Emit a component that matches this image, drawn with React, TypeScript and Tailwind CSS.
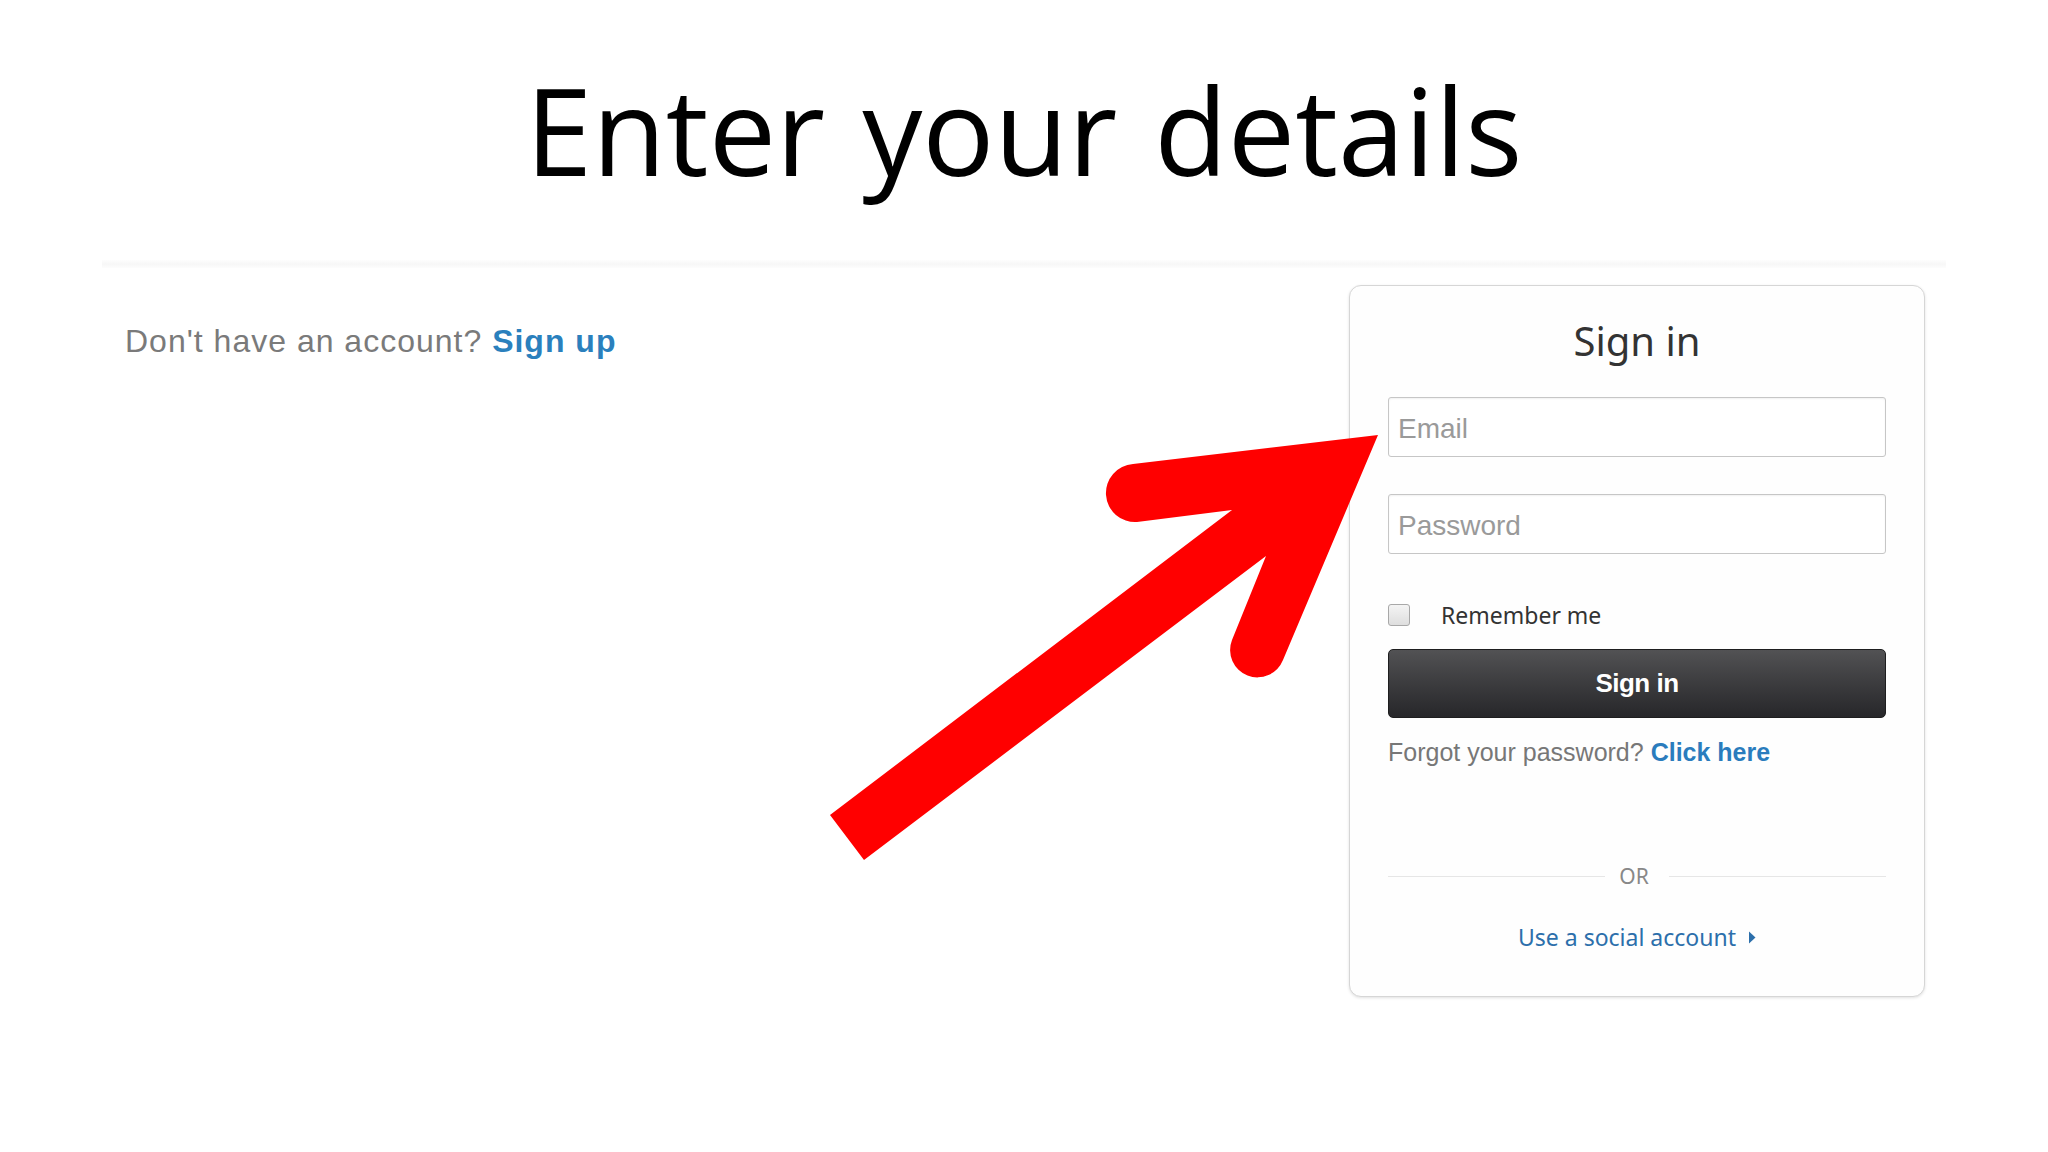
import React from "react";

function Arrow() {
  return (
    <svg
      className="absolute left-0 top-0 pointer-events-none"
      width={2048}
      height={1152}
      viewBox="0 0 2048 1152"
    >
      <path
        d="M 1378 435 L 1133 464 A 29 29 0 0 0 1137 522 L 1232 510 L 830 815 L 864 860 L 1266 556 L 1232 640 A 27 27 0 0 0 1283 660 Z"
        fill="#ff0000"
      />
    </svg>
  );
}

export default function App() {
  return (
    <div className="relative w-[2048px] h-[1152px] bg-white overflow-hidden">
      <h1
        className="pt-[70px] text-center text-[120px] leading-[120px] text-black font-normal [word-spacing:6px]"
        style={{ fontFamily: '"Open Sans", "Noto Sans", sans-serif' }}
      >
        Enter your details
      </h1>
      <div className="mx-[102px] mt-[70px] h-[8px] bg-gradient-to-b from-[#fdfdfd] via-[#f7f7f7] to-[#fdfdfd]" />
      <div className="flex justify-between items-start pl-[125px] pr-[123px] pt-[17px]">
        <p
          className="mt-[40px] text-[32px] leading-[32px] tracking-[1px] text-[#7a7a7a]"
          style={{ fontFamily: '"Liberation Sans", Arial, sans-serif' }}
        >
          Don't have an account?{" "}
          <span className="font-bold text-[#2a80bd]">Sign up</span>
        </p>
        <div className="box-border w-[576px] h-[712px] rounded-[12px] border border-[#d6d6d6] bg-[#fefefe] shadow-[0_1px_3px_rgba(0,0,0,0.12)] px-[38px] pt-[35px] flex flex-col">
          <h2
            className="text-center text-[40px] leading-[40px] text-[#333]"
            style={{ fontFamily: '"Noto Sans", "Open Sans", sans-serif' }}
          >
            Sign in
          </h2>
          <div
            className="mt-[36px] h-[60px] rounded-[3px] border border-[#c6c6c6] bg-white shadow-[inset_0_1px_2px_rgba(0,0,0,0.06)] flex items-center pl-[9px] pt-[3px] text-[28px] text-[#9a9a9a]"
            style={{ fontFamily: '"Liberation Sans", Arial, sans-serif' }}
          >
            Email
          </div>
          <div
            className="mt-[37px] h-[60px] rounded-[3px] border border-[#c6c6c6] bg-white shadow-[inset_0_1px_2px_rgba(0,0,0,0.06)] flex items-center pl-[9px] pt-[3px] text-[28px] text-[#9a9a9a]"
            style={{ fontFamily: '"Liberation Sans", Arial, sans-serif' }}
          >
            Password
          </div>
          <div className="mt-[46px] h-[30px] flex items-center">
            <div className="w-[22px] h-[22px] rounded-[3px] border border-[#a8a8a8] bg-gradient-to-b from-[#f4f4f4] to-[#dedede]" />
            <span
              className="ml-[31px] text-[23px] text-[#333]"
              style={{ fontFamily: '"Noto Sans", "Open Sans", sans-serif' }}
            >
              Remember me
            </span>
          </div>
          <div
            className="mt-[19px] h-[69px] rounded-[5px] border border-[#1e1e1f] bg-gradient-to-b from-[#525254] to-[#27272a] flex items-center justify-center text-white font-bold text-[26px] tracking-[-0.5px]"
            style={{ fontFamily: '"Liberation Sans", Arial, sans-serif' }}
          >
            Sign in
          </div>
          <p
            className="mt-[22px] text-[25px] leading-[24px] text-[#777]"
            style={{ fontFamily: '"Liberation Sans", Arial, sans-serif' }}
          >
            Forgot your password?{" "}
            <span className="font-bold text-[#2a7cbd]">Click here</span>
          </p>
          <div className="mt-[100px] h-[24px] flex items-center">
            <div className="flex-1 h-px bg-[#e6e6e6]" />
            <span
              className="pl-[14px] pr-[20px] text-[21px] leading-[24px] text-[#888]"
              style={{ fontFamily: '"Noto Sans", "Open Sans", sans-serif' }}
            >
              OR
            </span>
            <div className="flex-1 h-px bg-[#e6e6e6]" />
          </div>
          <div
            className="mt-[34px] h-[30px] flex items-center justify-center text-[23px] text-[#2c6fab]"
            style={{ fontFamily: '"Noto Sans", "Open Sans", sans-serif' }}
          >
            <span>Use a social account</span>
            <svg className="ml-[12px]" width="8" height="13" viewBox="0 0 8 13">
              <path d="M1 0.5 L7.5 6.5 L1 12.5 Z" fill="#2c6fab" />
            </svg>
          </div>
        </div>
      </div>
      <Arrow />
    </div>
  );
}
